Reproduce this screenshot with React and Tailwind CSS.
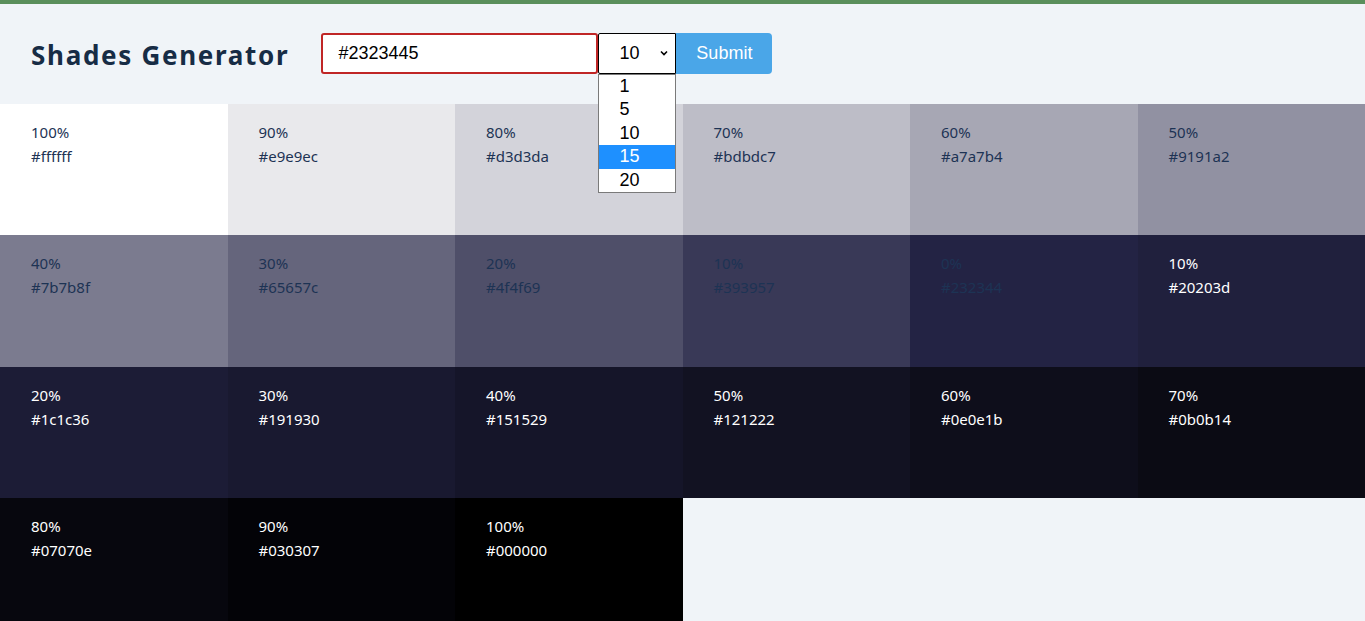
const tiles = [
  ["100%", "#ffffff", false],
  ["90%", "#e9e9ec", false],
  ["80%", "#d3d3da", false],
  ["70%", "#bdbdc7", false],
  ["60%", "#a7a7b4", false],
  ["50%", "#9191a2", false],
  ["40%", "#7b7b8f", false],
  ["30%", "#65657c", false],
  ["20%", "#4f4f69", false],
  ["10%", "#393957", false],
  ["0%", "#232344", false],
  ["10%", "#20203d", true],
  ["20%", "#1c1c36", true],
  ["30%", "#191930", true],
  ["40%", "#151529", true],
  ["50%", "#121222", true],
  ["60%", "#0e0e1b", true],
  ["70%", "#0b0b14", true],
  ["80%", "#07070e", true],
  ["90%", "#030307", true],
  ["100%", "#000000", true],
];

function Tile({ pct, hex, dark }) {
  return (
    <div
      className={`px-[31px] pt-4 text-[15px] leading-6 ${dark ? "text-white" : "text-[#1d3354]"}`}
      style={{ background: hex }}
    >
      <div>{pct}</div>
      <div>{hex}</div>
    </div>
  );
}

export default function App() {
  return (
    <div className="min-h-[621px] bg-[#f0f4f8] font-['Noto_Sans',sans-serif]">
      <div className="h-1 bg-[#5a8f5c]" />

      {/* header */}
      <div className="h-[100px] flex items-center px-[31px] pt-[2px]">
        <h1 className="text-[26px] font-bold tracking-[1.7px] text-[#172c45] mr-[32px]">
          Shades Generator
        </h1>
        <div className="flex items-center mt-[-4px]">
          <input
            defaultValue="#2323445"
            className="w-[277px] h-[41px] border-2 border-[#c02626] rounded-[3px] bg-white px-[15px] text-[18px] text-black font-['Liberation_Sans',sans-serif] outline-none"
          />
          <div className="relative">
            <div className="w-[78px] h-[41px] border border-black rounded-l-[2px] bg-white flex items-center justify-between pl-[20px] pr-[6px] text-[18px] text-black font-['Liberation_Sans',sans-serif]">
              <span>10</span>
              <svg width="10" height="10" viewBox="0 0 10 10">
                <path d="M2 3.5 L5 6.5 L8 3.5" fill="none" stroke="#000" strokeWidth="1.6" />
              </svg>
            </div>
            {/* open dropdown */}
            <div className="absolute left-0 top-[41px] w-[78px] border border-[#7a7a7a] bg-white z-10 text-[18px] text-black font-['Liberation_Sans',sans-serif] leading-[23.5px]">
              {["1", "5", "10", "15", "20"].map((o) => (
                <div key={o} className={`pl-[20px] ${o === "15" ? "bg-[#1e90ff] text-white" : ""}`}>
                  {o}
                </div>
              ))}
            </div>
          </div>
          <button className="w-[96px] h-[41px] bg-[#4aa6e8] text-white text-[18px] rounded-r-[4px] font-['Liberation_Sans',sans-serif]">
            Submit
          </button>
        </div>
      </div>

      {/* shades grid */}
      <div className="grid grid-cols-6 auto-rows-[131.4px]">
        {tiles.map(([pct, hex, dark], i) => (
          <Tile key={i} pct={pct} hex={hex} dark={dark} />
        ))}
      </div>
    </div>
  );
}
